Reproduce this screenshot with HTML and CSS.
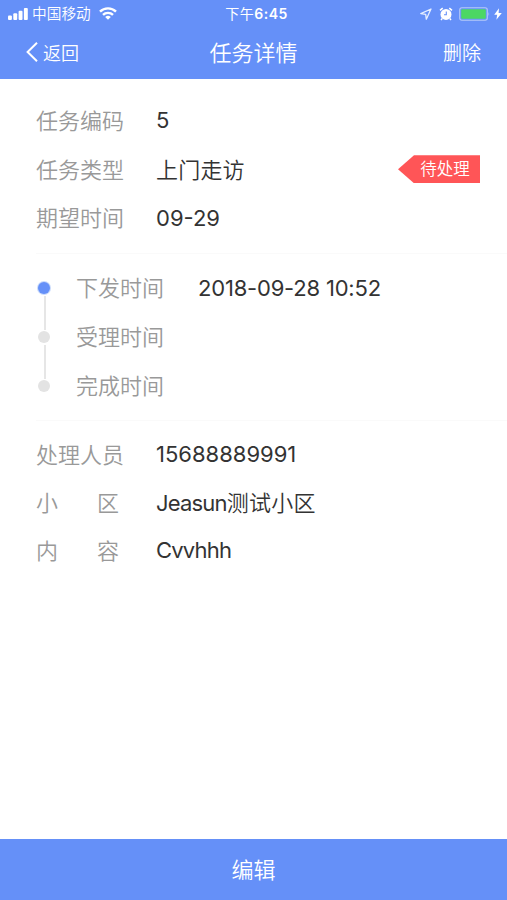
FILE: index.html
```
<!DOCTYPE html>
<html lang="zh-CN">
<head>
<meta charset="UTF-8">
<meta name="viewport" content="width=device-width, initial-scale=1.0">
<title>任务详情</title>
<link rel="stylesheet" href="styles.css">
</head>
<body>
<div class="page">
  <header class="header">
    <div class="status-bar">
      <div class="status-left">
        <svg class="signal" width="20" height="12" viewBox="0 0 20 12" fill="#fff">
          <rect x="0" y="7.4" width="3.9" height="4.6" rx="1"/>
          <rect x="5.3" y="5.2" width="3.9" height="6.8" rx="1"/>
          <rect x="10.6" y="2.8" width="3.9" height="9.2" rx="1"/>
          <rect x="15.9" y="0" width="3.9" height="12" rx="1"/>
        </svg>
        <span class="carrier">中国移动</span>
        <svg class="wifi" width="18" height="13" viewBox="0 0 18 13" fill="none" stroke="#fff" stroke-width="2.4">
          <path d="M1 4.7a11.3 11.3 0 0 1 16 0"/>
          <path d="M4 7.9a7.1 7.1 0 0 1 10 0"/>
          <path d="M9 12.8 6.2 10a4 4 0 0 1 5.6 0z" fill="#fff" stroke="none"/>
        </svg>
      </div>
      <div class="time">下午<b>6:45</b></div>
      <div class="status-right">
        <svg width="12" height="12" viewBox="0 0 12 12" fill="none" stroke="#e6eeff" stroke-width="1.3" stroke-linejoin="round">
          <path d="M11 1 .8 5.6l4.9.7.6 4.9z"/>
        </svg>
        <svg class="alarm" width="14" height="14" viewBox="0 0 14 14">
          <circle cx="7" cy="7.4" r="5.5" fill="#fff"/>
          <path d="M1 3.4 3.7 1.1M13 3.4 10.3 1.1M3.2 11.6 2 13M10.8 11.6l1.2 1.4" stroke="#fff" stroke-width="1.5"/>
          <path d="M7.3 4.6v3.1H5" fill="none" stroke="#6590f8" stroke-width="1.1"/>
        </svg>
        <svg class="battery" width="31" height="14" viewBox="0 0 31 14">
          <rect x=".7" y=".7" width="27.6" height="12.6" rx="2.2" fill="none" stroke="#b5c9f8" stroke-width="1.1"/>
          <rect x="2.2" y="2.2" width="24.6" height="9.6" rx="1" fill="#4cd763"/>
          <path d="M29.5 5q1.4 2 0 4z" fill="#b5c9f8"/>
        </svg>
        <svg width="8" height="12" viewBox="0 0 8 12" fill="#fff">
          <path d="M5 .3.2 6.7h3L2.4 11.8 7.8 5H4.6z"/>
        </svg>
      </div>
    </div>
    <nav class="nav-bar">
      <a class="back">
        <svg width="12" height="20" viewBox="0 0 12 20" fill="none" stroke="#fff" stroke-width="2">
          <path d="M11 .8 1.6 10 11 19.2"/>
        </svg>
        <span>返回</span>
      </a>
      <h1>任务详情</h1>
      <a class="delete">删除</a>
    </nav>
  </header>

  <main class="content">
    <section class="group info">
      <div class="row"><span class="label">任务编码</span><span class="value">5</span></div>
      <div class="row">
        <span class="label">任务类型</span><span class="value cn">上门走访</span>
        <span class="tag">待处理</span>
      </div>
      <div class="row"><span class="label">期望时间</span><span class="value">09-29</span></div>
    </section>

    <section class="group timeline">
      <div class="row active"><i class="dot"></i><span class="label">下发时间</span><span class="value date">2018-09-28 10:52</span></div>
      <div class="row"><i class="dot"></i><span class="label">受理时间</span></div>
      <div class="row"><i class="dot"></i><span class="label">完成时间</span></div>
    </section>

    <section class="group detail">
      <div class="row"><span class="label">处理人员</span><span class="value">15688889991</span></div>
      <div class="row"><span class="label spread"><span>小</span><span>区</span></span><span class="value cn"><span class="latin">Jeasun</span>测试小区</span></div>
      <div class="row"><span class="label spread"><span>内</span><span>容</span></span><span class="value latin">Cvvhhh</span></div>
    </section>
  </main>

  <footer class="footer">编辑</footer>
</div>
</body>
</html>
```
FILE: styles.css
```
* {
  margin: 0;
  padding: 0;
  box-sizing: border-box;
}

body {
  height: 100vh;
  background: #fff;
  font-family: Inter, "Noto Sans CJK SC", sans-serif;
  font-size: 22px;
  color: #333;
  overflow: hidden;
}

.page {
  height: 100%;
  display: flex;
  flex-direction: column;
}

svg {
  display: block;
  flex: none;
}

/* Header */
.header {
  height: 79px;
  background: #6590f8;
  color: #fff;
}

.status-bar {
  height: 27px;
  display: grid;
  grid-template-columns: 1fr auto 1fr;
  align-items: center;
  padding: 0 5px 0 8px;
  font-size: 14.7px;
  line-height: 25px;
}

.status-left,
.status-right {
  display: flex;
  align-items: center;
}

.carrier {
  margin: 0 8px 0 4px;
  padding-top: 1px;
  font-weight: 350;
}

.time {
  padding-left: 3px;
  font-size: 14px;
  letter-spacing: 0.5px;
}

.time b {
  font-weight: 600;
}

.status-right {
  justify-content: flex-end;
}

.alarm {
  margin: 0 6px 0 7px;
}

.battery {
  margin-right: 4px;
}

.nav-bar {
  height: 52px;
  display: grid;
  grid-template-columns: 1fr auto 1fr;
  align-items: center;
  padding: 0 26px 3px;
  font-size: 19px;
  font-weight: 350;
}

.back {
  display: flex;
  align-items: center;
  gap: 5px;
  font-size: 18px;
}

.nav-bar h1 {
  padding-bottom: 2px;
  font-size: 22px;
  font-weight: 350;
}

.delete {
  text-align: right;
}

/* Rows */
.content {
  flex: 1;
}

.group {
  margin-left: 36px;
  padding-right: 27px;
}

.group + .group {
  border-top: 1px solid #fafafa;
}

.row {
  height: 48.8px;
  display: flex;
  align-items: center;
}

.info {
  height: 174px;
  padding-top: 17px;
}

.timeline {
  height: 167px;
  padding-top: 10px;
}

.detail {
  padding-top: 9px;
}

.detail .row {
  height: 48.4px;
}

.label {
  width: 120px;
  padding-bottom: 3px;
  color: #999;
  font-weight: 350;
}

.value.cn {
  padding-bottom: 3px;
  font-weight: 350;
  letter-spacing: 0.2px;
}

.value .latin,
.value.latin {
  font-weight: 400;
  letter-spacing: -0.8px;
}

.value.latin {
  padding-bottom: 1px;
}

.date {
  letter-spacing: -0.2px;
}

.spread {
  width: 83px;
  margin-right: 37px;
  display: flex;
  justify-content: space-between;
}

/* Status tag */
.tag {
  width: 82px;
  height: 28px;
  margin-left: auto;
  padding-left: 12px;
  background: #ff5557;
  clip-path: polygon(0 50%, 16px 0, 100% 0, 100% 100%, 16px 100%);
  color: #fff;
  font-size: 16.5px;
  font-weight: 350;
  line-height: 29px;
  text-align: center;
}

/* Timeline */
.timeline .row {
  position: relative;
}

.timeline .label {
  width: 122px;
  padding-bottom: 4px;
}

.dot {
  width: 12px;
  height: 12px;
  margin: 0 26px 0 2px;
  border-radius: 50%;
  background: #e3e3e3;
}

.active .dot {
  background: #6590f8;
  box-shadow: 0 0 0 1px #c9dafb;
}

/* connecting line between two dots */
.timeline .row + .row::before {
  content: '';
  position: absolute;
  left: 8px;
  top: -17px;
  width: 2px;
  height: 34px;
  background: #e6e6e6;
}

/* Footer */
.footer {
  height: 61px;
  background: #6590f8;
  color: #fff;
  font-weight: 350;
  line-height: 62px;
  text-align: center;
}
```
